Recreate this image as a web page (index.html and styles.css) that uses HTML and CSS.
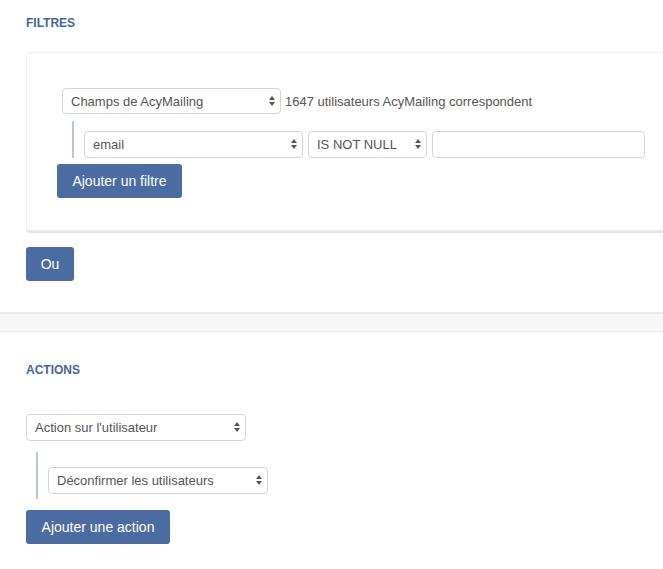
FILE: index.html
```html
<!DOCTYPE html>
<html lang="fr">
<head>
<meta charset="utf-8">
<title>Filtres</title>
<link rel="stylesheet" href="styles.css">
</head>
<body>
<section class="block filters">
  <h2 class="title">FILTRES</h2>
  <div class="card">
    <div class="row">
      <div class="sel w219">
        <select><option>Champs de AcyMailing</option></select>
        <svg class="arr" width="6" height="10" viewBox="0 0 6 10"><path d="M3 0L6 4H0z M3 10L0 6H6z" fill="#555"/></svg>
      </div>
      <span class="count">1647 utilisateurs AcyMailing correspondent</span>
    </div>
    <div class="sub sub-filter">
      <div class="row gap5">
        <div class="sel w219">
          <select><option>email</option></select>
          <svg class="arr" width="6" height="10" viewBox="0 0 6 10"><path d="M3 0L6 4H0z M3 10L0 6H6z" fill="#555"/></svg>
        </div>
        <div class="sel w119">
          <select><option>IS NOT NULL</option></select>
          <svg class="arr" width="6" height="10" viewBox="0 0 6 10"><path d="M3 0L6 4H0z M3 10L0 6H6z" fill="#555"/></svg>
        </div>
        <input class="txt" type="text">
      </div>
    </div>
    <button class="btn btn-filter">Ajouter un filtre</button>
  </div>
  <button class="btn btn-or">Ou</button>
</section>
<div class="band"></div>
<section class="block actions">
  <h2 class="title">ACTIONS</h2>
  <div class="sel w220">
    <select><option>Action sur l'utilisateur</option></select>
    <svg class="arr" width="6" height="10" viewBox="0 0 6 10"><path d="M3 0L6 4H0z M3 10L0 6H6z" fill="#555"/></svg>
  </div>
  <div class="sub sub-action">
    <div class="sel w220">
      <select><option>Déconfirmer les utilisateurs</option></select>
      <svg class="arr" width="6" height="10" viewBox="0 0 6 10"><path d="M3 0L6 4H0z M3 10L0 6H6z" fill="#555"/></svg>
    </div>
  </div>
  <button class="btn btn-action">Ajouter une action</button>
</section>
</body>
</html>
```

FILE: styles.css
```css
html, body {
  margin: 0;
  padding: 0;
  background: #fff;
  overflow: hidden;
}
body {
  font-family: "Liberation Sans", Arial, sans-serif;
  color: #555;
  font-size: 13px;
}
.block {
  padding-left: 26px;
}
.title {
  margin: 0;
  font-size: 12px;
  line-height: 13px;
  font-weight: bold;
  color: #44659a;
}
.filters {
  padding-top: 17px;
  padding-bottom: 31px;
}
.filters .title {
  margin-bottom: 22px;
}
.card {
  margin-right: -20px;
  border: 1px solid #ececec;
  border-radius: 4px;
  box-shadow: 0 2px 0 #e6e6e6;
  padding: 35px 0 32px 35px;
}
.row {
  display: flex;
  align-items: center;
}
.gap5 {
  gap: 5px;
}
.count {
  margin-left: 4px;
  font-size: 13px;
  color: #555;
}
.sel {
  position: relative;
  height: 26px;
}
.sel select {
  appearance: none;
  -webkit-appearance: none;
  width: 100%;
  height: 26px;
  box-sizing: border-box;
  border: 1px solid #d4d4d4;
  border-radius: 4px;
  background: #fff;
  font-family: "Liberation Sans", Arial, sans-serif;
  font-size: 13px;
  color: #555;
  padding: 0 20px 0 8px;
  margin: 0;
}
.sel .arr {
  position: absolute;
  right: 6px;
  top: 8px;
  pointer-events: none;
}
.w219 { width: 219px; }
.w119 { width: 119px; }
.w220 { width: 220px; }
.txt {
  width: 213px;
  height: 27px;
  box-sizing: border-box;
  border: 1px solid #d4d4d4;
  border-radius: 4px;
  margin: 0;
  padding: 0 6px;
}
.sub {
  border-left: 2px solid #b3c7e3;
  margin-left: 10px;
  padding-left: 10px;
}
.sub-filter {
  margin-top: 7px;
  padding-top: 10px;
  padding-bottom: 0;
}
.sub-filter .sel,
.sub-filter .sel select {
  height: 27px;
}
.btn {
  display: block;
  height: 34px;
  border: none;
  border-radius: 3px;
  background: #4b6ca2;
  color: #fff;
  font-family: "Liberation Sans", Arial, sans-serif;
  font-size: 14px;
  padding: 0 15px;
  margin: 0;
  cursor: pointer;
}
.btn-filter {
  margin-top: 6px;
  margin-left: -5px;
  width: 125px;
}
.btn-or {
  margin-top: 16px;
  width: 48px;
  padding: 0;
}
.band {
  height: 17px;
  border-top: 2px solid #ececec;
  border-bottom: 1px solid #ececec;
  background: #f7f7f7;
}
.actions {
  padding-top: 32px;
}
.actions .title {
  margin-bottom: 37px;
}
.actions .sel,
.actions .sel select {
  height: 27px;
}
.sub-action {
  margin-top: 11px;
  padding-top: 15px;
  padding-bottom: 5px;
}
.btn-action {
  margin-top: 11px;
  width: 144px;
}
```
